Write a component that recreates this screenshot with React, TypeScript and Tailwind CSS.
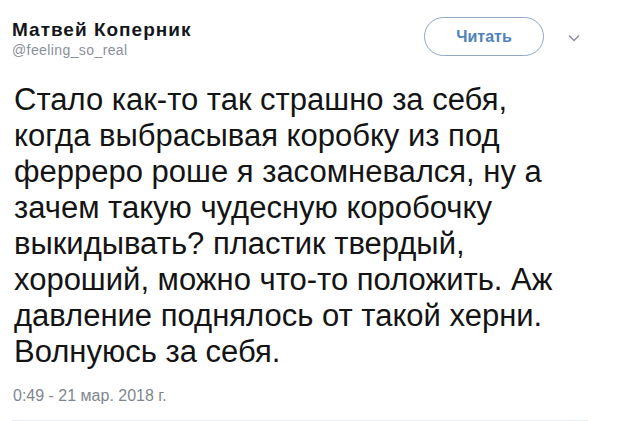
import React from "react";

export default function App() {
  const lines = [
    "Стало как-то так страшно за себя,",
    "когда выбрасывая коробку из под",
    "ферреро роше я засомневался, ну а",
    "зачем такую чудесную коробочку",
    "выкидывать? пластик твердый,",
    "хороший, можно что-то положить. Аж",
    "давление поднялось от такой херни.",
    "Волнуюсь за себя.",
  ];
  return (
    <div
      className="w-[620px] h-[421px] bg-white overflow-hidden relative"
      style={{ fontFamily: '"Liberation Sans", Arial, sans-serif' }}
    >
      <div className="flex items-start justify-between pl-[12px] pr-[40px] pt-[17px]">
        <div className="flex flex-col">
          <div className="text-[19px] font-bold leading-[22px] tracking-[1px] text-[#14171a] mt-[2px] whitespace-nowrap">
            Матвей Коперник
          </div>
          <div className="text-[14px] leading-[18px] tracking-[0.4px] text-[#8a9099] whitespace-nowrap">
            @feeling_so_real
          </div>
        </div>
        <div className="flex items-center gap-[24px]">
          <div className="w-[120px] h-[39px] rounded-full border border-[#8fa9c4] flex items-center justify-center text-[16px] font-bold text-[#4f82bb]">
            Читать
          </div>
          <svg width="12" height="8" viewBox="0 0 12 8" className="mt-[3px]">
            <path d="M1 1.5 L6 6.5 L11 1.5" fill="none" stroke="#8a9099" strokeWidth="1.5" />
          </svg>
        </div>
      </div>
      <div className="pl-[14px] mt-[23px] text-[31px] leading-[36px] text-[#141414]">
        {lines.map((l, i) => (
          <div key={i} className="whitespace-nowrap">{l}</div>
        ))}
      </div>
      <div className="pl-[13px] mt-[16px] text-[16px] leading-[20px] text-[#7f868e] whitespace-nowrap">
        0:49 - 21 мар. 2018 г.
      </div>
      <div className="absolute left-[12px] w-[576px] bottom-0 h-px bg-[#e6ecf0]" />
    </div>
  );
}
